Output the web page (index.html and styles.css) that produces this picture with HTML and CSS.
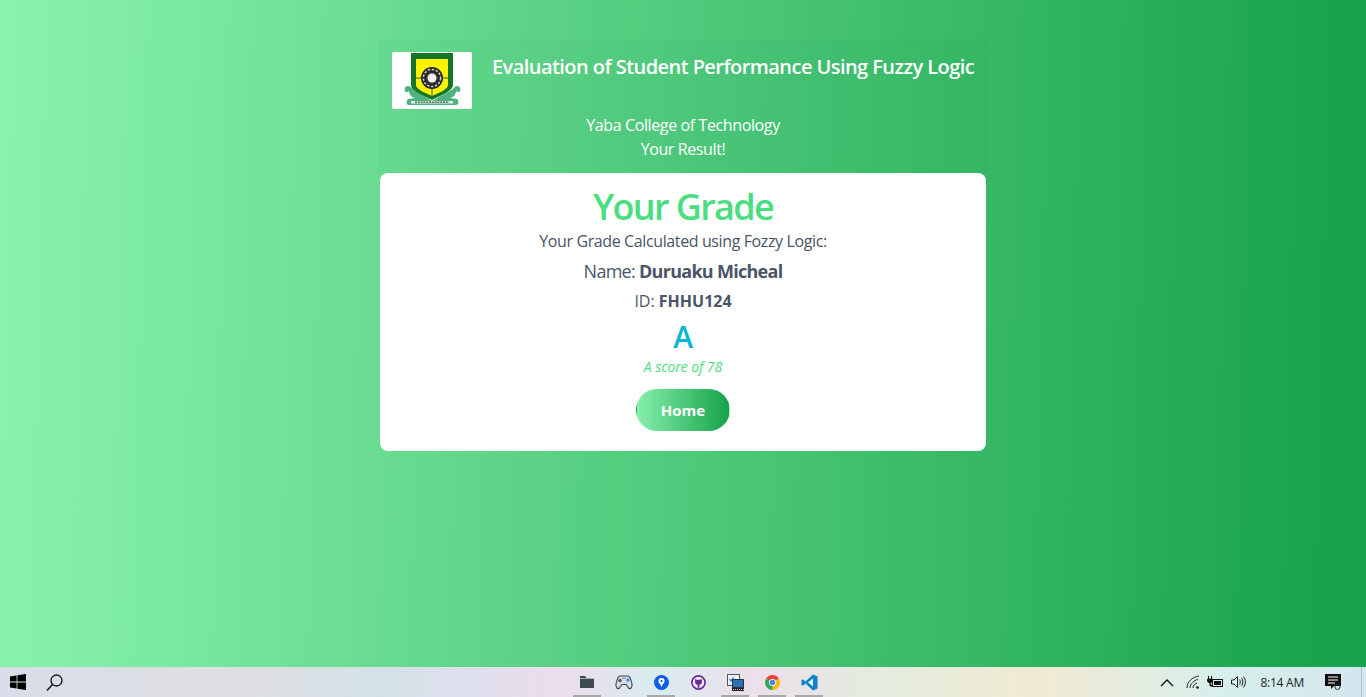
FILE: index.html
```html
<!DOCTYPE html>
<html lang="en">
<head>
<meta charset="utf-8">
<title>Your Grade</title>
<link rel="stylesheet" href="styles.css">
</head>
<body>
<main class="page">
  <div class="wrap">
    <header class="head">
      <div class="head-top">
        <div class="logo">
          <svg width="80" height="57" viewBox="0 0 80 57" aria-hidden="true">
            <path d="M16 34c-3 0-4 3-3 5 1 2 3 1 4 0 0 3 2 6 6 7l-7 1c-2 2-2 6 1 6h47c3 0 3-4 1-6l-7-1c4-1 6-4 6-7 1 1 3 2 4 0 1-2 0-5-3-5-2 0-3 2-4 3L40 49 21 37c-1-1-3-3-5-3z" fill="#4fb27c"/>
            <path d="M19 1h42v32c0 6-12 10-21 15-9-5-21-9-21-15z" fill="#15762a"/>
            <path d="M24 7h32v26c0 4-9 8-16 11-7-3-16-7-16-11z" fill="#fff200"/>
            <path d="M24 26h32M40 26v18" stroke="#37611c" stroke-width="1"/>
            <circle cx="40" cy="26" r="11" fill="#262626"/>
            <circle cx="40" cy="26" r="8.600" fill="none" stroke="#cfcfcf" stroke-width="1.500" stroke-dasharray="2.400 1.600"/>
            <circle cx="40" cy="26" r="6" fill="#3a3a3a"/>
            <circle cx="40" cy="26" r="4.500" fill="#f2f2f2"/>
            <path d="M19 49h42v2.500H19z" fill="#e8f4ec"/>
            <path d="M23 50.200h34" stroke="#2d4d3a" stroke-width="1.200" stroke-dasharray="2 .8"/>
          </svg>
        </div>
        <h1 class="title">Evaluation of Student Performance Using Fuzzy Logic</h1>
      </div>
      <p class="sub">Yaba College of Technology</p>
      <p class="sub">Your Result!</p>
    </header>
    <section class="card">
      <h2 class="grade-title">Your Grade</h2>
      <p class="intro">Your Grade Calculated using Fozzy Logic:</p>
      <p class="name">Name: <strong>Duruaku Micheal</strong></p>
      <p class="id">ID: <strong>FHHU124</strong></p>
      <p class="grade">A</p>
      <p class="score">A score of 78</p>
      <a class="home" href="#">Home</a>
    </section>
  </div>
</main>
<footer class="taskbar">
  <div class="tb-left">
    <svg width="16" height="16" viewBox="0 0 16 16"><path d="M0 2.400 6.600 1.400v6.200H0zM7.400 1.300 16 0v7.600H7.400zM0 8.400h6.600v6.200L0 13.600zM7.400 8.400H16V16l-8.600-1.300z" fill="#000"/></svg>
    <svg width="17" height="17" viewBox="0 0 17 17"><circle cx="10.500" cy="6.500" r="5.500" fill="none" stroke="#111" stroke-width="1.300"/><path d="M6.500 10.500 1 16.500" stroke="#111" stroke-width="1.500"/></svg>
  </div>
  <div class="tb-apps">
    <span class="app on"><svg width="14" height="12" viewBox="0 0 14 12"><path d="M0 0h5l1.500 2H14v10H0z" fill="#3f4a4f"/><path d="M0 2.500h14" stroke="#aab4b8" stroke-width="1"/></svg></span>
    <span class="app"><svg width="18" height="15" viewBox="0 0 18 15"><path d="M5 1h8c2 0 3 3 4 8 .5 3-1.500 6-3.500 4L11 9.500H7L4.500 13C2.500 15 .5 12 1 9c1-5 2-8 4-8z" fill="#d5dde8" stroke="#3c4450" stroke-width="1.100"/><circle cx="13" cy="5" r="1.700" fill="#4a8ad8"/><circle cx="5" cy="5.500" r="1.700" fill="#555"/><path d="M7 3h4" stroke="#7a8aa0"/></svg></span>
    <span class="app on"><svg width="15" height="15" viewBox="0 0 16 16"><circle cx="8" cy="8" r="8" fill="#0f5bea"/><circle cx="8" cy="6.500" r="3.300" fill="#fff"/><path d="M6.300 8.500h3.400L8 13z" fill="#fff"/><circle cx="8" cy="6.500" r="1.200" fill="#0f5bea"/></svg></span>
    <span class="app"><svg width="15" height="15" viewBox="0 0 16 16"><circle cx="8" cy="8" r="7" fill="#f2eef8" stroke="#6b2a9b" stroke-width="1.800"/><path d="M4.500 4 6 5h4l1.500-1 .2 3.500c0 1.800-1.500 2.800-2.700 3v3H7v-3C5.800 10.300 4.300 9.300 4.300 7.500z" fill="#6b2a9b"/></svg></span>
    <span class="app on"><svg width="17" height="17" viewBox="0 0 17 17"><rect x=".5" y=".5" width="12" height="11" fill="#eef2f6" stroke="#556"/><path d="M2.500 5 4 7l2.500-3.500" fill="none" stroke="#1c6fd0" stroke-width="1.200"/><rect x="5.500" y="5.500" width="11" height="8" fill="#2b6fb5" stroke="#333"/><path d="M5 14h12v3H5z" fill="#222"/><path d="M6 15.500h11" stroke="#ddd" stroke-dasharray="1 1"/></svg></span>
    <span class="app on"><svg width="15" height="15" viewBox="0 0 16 16"><path d="M8 8 1.100 4A8 8 0 0 1 14.900 4z" fill="#ea4335"/><path d="M8 8 14.900 4A8 8 0 0 1 8 16z" fill="#fbbc05"/><path d="M8 8 8 16A8 8 0 0 1 1.100 4z" fill="#34a853"/><circle cx="8" cy="8" r="3.700" fill="#fff"/><circle cx="8" cy="8" r="2.900" fill="#4285f4"/></svg></span>
    <span class="app on"><svg width="17" height="17" viewBox="0 0 17 17"><path d="M12 .5 16.500 2.500v12L12 16.500 4.500 9.500 1.800 11.700.5 11V6l1.300-.7 2.700 2.200z" fill="#0a84d0"/><path d="M12 4.500 7 8.500l5 4z" fill="#eef6fa"/></svg></span>
  </div>
  <div class="tray">
    <svg class="i-chev" width="14" height="9" viewBox="0 0 14 9"><path d="M1 8 7 2l6 6" fill="none" stroke="#111" stroke-width="1.300"/></svg>
    <svg class="i-wifi" width="14" height="14" viewBox="0 0 14 14"><path d="M1 13C1 7 6 2 13 1M4 13c0-4 4-8 8-8.500M7 13c0-2.500 2-4.500 4-5" fill="none" stroke="#222" stroke-width="1"/><circle cx="11.500" cy="12.500" r="1.300" fill="#111"/></svg>
    <svg class="i-batt" width="16" height="12" viewBox="0 0 16 12"><path d="M1.500 0v3M4.500 0v3" stroke="#111" stroke-width="1"/><path d="M.5 3h5v2.500L3 7.500.5 5.500zM3 7.500V10h3" fill="#111" stroke="#111" stroke-width=".8"/><rect x="5.500" y="3.500" width="10" height="7" fill="none" stroke="#111" stroke-width="1"/><rect x="7" y="5" width="7" height="4" fill="#111"/></svg>
    <svg class="i-vol" width="16" height="14" viewBox="0 0 16 14"><path d="M.5 5h2.500L6.500 1.500v11L3 9H.5zM8.500 4.500c1 1.500 1 3.500 0 5M10.500 3c1.800 2.400 1.800 5.600 0 8M12.500 1.500c2.500 3.200 2.500 7.800 0 11" fill="none" stroke="#222" stroke-width="1"/></svg>
    <span class="clock">8:14 AM</span>
    <svg width="16" height="17" viewBox="0 0 16 17"><path d="M0 0h16v12H9l-3 3v-3H0z" fill="#111"/><path d="M3 3h10M3 6h10M3 9h7" stroke="#fff" stroke-width="1"/><circle cx="12.500" cy="13" r="2.500" fill="none" stroke="#333" stroke-width="1"/></svg>
  </div>
  <span class="edge"></span>
</footer>
</body>
</html>
```
FILE: styles.css
```css
* { box-sizing: border-box; }
html, body { margin: 0; height: 100%; }
body {
  display: flex;
  flex-direction: column;
  height: 697px;
  overflow: hidden;
  font-family: "Open Sans", "Noto Sans", sans-serif;
  color: #4a5568;
  letter-spacing: -0.024em;
}
.page {
  flex: 1;
  background: linear-gradient(91.5deg, #8af3ae 0, #18a34c 97%);
  display: flex;
  justify-content: center;
  padding-top: 42px;
}
.wrap { width: 606px; }
.head {
  padding: 10px 12px 12px;
  height: 131px;
  background: rgba(0, 120, 60, 0.03);
  box-shadow: 0 0 3px rgba(0, 100, 50, 0.12);
  color: #fff;
  text-align: center;
}
.head-top { display: flex; gap: 20px; height: 61px; }
.logo {
  flex: none;
  width: 80px;
  height: 57px;
  background: #fff;
  border-radius: 2px;
}
.logo svg { display: block; }
.title { margin: 0; font-size: 20px; line-height: 30px; font-weight: 600; white-space: nowrap; letter-spacing: -0.028em; }
.sub { margin: 0; font-size: 16px; line-height: 24px; }
.card {
  height: 278px;
  background: #fff;
  border-radius: 8px;
  padding-top: 11px;
  display: flex;
  flex-direction: column;
  align-items: center;
  text-align: center;
}
.card p { margin: 0; }
.grade-title { margin: 0; font-size: 36px; line-height: 45px; font-weight: 600; color: #4ade80; letter-spacing: -0.046em; }
.intro { font-size: 16px; line-height: 24px; }
.name { font-size: 18px; line-height: 36px; letter-spacing: -0.04em; }
.id { font-size: 16px; line-height: 24px; letter-spacing: 0; }
.card .grade { font-size: 30px; line-height: 46px; font-weight: 600; color: #06b6d4; margin: 1px 0 -1px; }
.score { font-size: 14px; line-height: 16px; font-style: italic; color: #4ade80; letter-spacing: -0.005em; }
.home {
  margin-top: 14px;
  width: 94px;
  height: 42px;
  border: 1px solid transparent;
  border-radius: 21px;
  background: linear-gradient(90deg, #86efac, #16a34a);
  color: #fff;
  font-weight: 700;
  font-size: 15px;
  line-height: 40px;
  text-decoration: none;
  letter-spacing: 0;
}
.taskbar {
  height: 30px;
  flex: none;
  display: flex;
  align-items: center;
  justify-content: space-between;
  position: relative;
  letter-spacing: 0;
  background: linear-gradient(90deg, #d8dde9 0, #dfdfe2 18%, #d3e1e8 28%, #dfe1ee 34%, #ecdcec 41%, #d9ecee 48%, #ecdfea 55%, #e3ecdf 64%, #f1ead2 76%, #d6efec 90%, #d5e6ee 100%);
}
.tb-left { display: flex; align-items: center; gap: 20px; padding-left: 10px; }
.tb-apps { display: flex; position: absolute; left: 573px; top: 0; height: 30px; gap: 9px; }
.app { width: 28px; height: 30px; display: flex; align-items: center; justify-content: center; border-bottom: 2px solid transparent; padding-top: 2px; }
.app.on { border-bottom-color: #a8a8a8; }
.tray { display: flex; align-items: center; padding-right: 25px; }
.i-wifi { margin-left: 12px; }
.i-batt { margin-left: 7px; }
.i-vol { margin-left: 8px; }
.clock { font-size: 12px; color: #222; margin: 0 21px 0 13px; letter-spacing: -0.02em; }
.edge { position: absolute; right: 4px; top: 0; bottom: 0; width: 1px; background: #aebcc4; }
```
